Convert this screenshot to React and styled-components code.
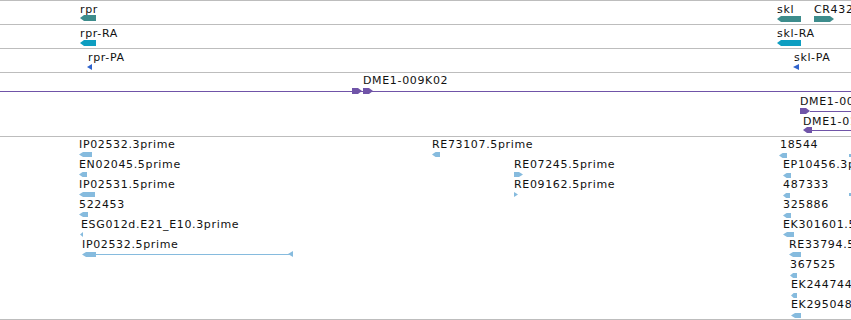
import React from 'react'
import styled, { createGlobalStyle } from 'styled-components'

const GlobalStyle = createGlobalStyle`
  html, body {
    margin: 0;
    padding: 0;
    background: #fff;
  }
  body {
    width: 851px;
    height: 320px;
    overflow: hidden;
    font-family: "DejaVu Sans", "Liberation Sans", sans-serif;
  }
`

const C = {
  gene: '#3d8c8c',
  mrna: '#0e9ec1',
  cds: '#2f63cd',
  clone: '#7054a8',
  est: '#86bbde',
  rule: '#bdbdbd',
}

// page rows, top is the y of each track's separator line
const tracks = [
  {
    top: 0, h: 24,
    labels: [['rpr', 80, 5], ['skl', 777, 5], ['CR43238', 814, 5]],
    glyphs: [
      { s: 'L', x: 80, w: 16, y: 15, h: 6, c: C.gene },
      { s: 'L', x: 777, w: 24, y: 16, h: 6, c: C.gene },
      { s: 'R', x: 814, w: 20, y: 16, h: 6, c: C.gene },
    ],
  },
  {
    top: 24, h: 24,
    labels: [['rpr-RA', 80, 29], ['skl-RA', 777, 29]],
    glyphs: [
      { s: 'L', x: 80, w: 16, y: 40, h: 6, c: C.mrna },
      { s: 'L', x: 777, w: 24, y: 40, h: 6, c: C.mrna },
    ],
  },
  {
    top: 48, h: 24,
    labels: [['rpr-PA', 88, 53], ['skl-PA', 794, 53]],
    glyphs: [
      { s: 'tL', x: 87, w: 5, y: 64, h: 6, c: C.cds },
      { s: 'tL', x: 793, w: 6, y: 64, h: 6, c: C.cds },
    ],
  },
  {
    top: 72, h: 64,
    labels: [['DME1-009K02', 363, 76], ['DME1-006C11', 800, 97], ['DME1-014B07', 803, 117]],
    glyphs: [
      { s: 'line', x: 0, w: 851, y: 91, h: 1, c: C.clone },
      { s: 'R', x: 352, w: 10, y: 88, h: 6, c: C.clone },
      { s: 'R', x: 363, w: 10, y: 88, h: 6, c: C.clone },
      { s: 'R', x: 800, w: 10, y: 108, h: 6, c: C.clone },
      { s: 'line', x: 810, w: 41, y: 111, h: 1, c: C.clone },
      { s: 'L', x: 803, w: 9, y: 127, h: 6, c: C.clone },
      { s: 'line', x: 812, w: 39, y: 130, h: 1, c: C.clone },
    ],
  },
  {
    top: 136, h: 184, last: true,
    labels: [
      ['IP02532.3prime', 79, 140],
      ['EN02045.5prime', 79, 160],
      ['IP02531.5prime', 79, 180],
      ['522453', 79, 200],
      ['ESG012d.E21_E10.3prime', 81, 220],
      ['IP02532.5prime', 82, 240],
      ['RE73107.5prime', 432, 140],
      ['RE07245.5prime', 514, 160],
      ['RE09162.5prime', 514, 180],
      ['18544', 780, 140],
      ['EP10456.3prime', 783, 160],
      ['487333', 783, 180],
      ['325886', 783, 200],
      ['EK301601.5prime', 783, 220],
      ['RE33794.5prime', 789, 240],
      ['367525', 790, 260],
      ['EK244744.5prime', 791, 280],
      ['EK295048.5prime', 791, 300],
    ],
    glyphs: [
      { s: 'L', x: 79, w: 13, y: 152, h: 5, c: C.est },
      { s: 'L', x: 79, w: 8, y: 172, h: 5, c: C.est },
      { s: 'L', x: 79, w: 16, y: 192, h: 5, c: C.est },
      { s: 'L', x: 79, w: 9, y: 212, h: 5, c: C.est },
      { s: 'tL', x: 80, w: 3, y: 232, h: 5, c: C.est },
      { s: 'L', x: 82, w: 14, y: 252, h: 5, c: C.est },
      { s: 'line', x: 96, w: 194, y: 254, h: 1, c: C.est },
      { s: 'tL', x: 288, w: 5, y: 251, h: 6, c: C.est },
      { s: 'L', x: 432, w: 8, y: 152, h: 5, c: C.est },
      { s: 'R', x: 514, w: 9, y: 172, h: 5, c: C.est },
      { s: 'tR', x: 514, w: 4, y: 192, h: 5, c: C.est },
      { s: 'L', x: 779, w: 8, y: 153, h: 5, c: C.est },
      { s: 'L', x: 783, w: 8, y: 173, h: 5, c: C.est },
      { s: 'L', x: 783, w: 7, y: 193, h: 5, c: C.est },
      { s: 'L', x: 783, w: 8, y: 213, h: 5, c: C.est },
      { s: 'L', x: 783, w: 11, y: 232, h: 5, c: C.est },
      { s: 'L', x: 789, w: 12, y: 252, h: 5, c: C.est },
      { s: 'L', x: 790, w: 7, y: 273, h: 5, c: C.est },
      { s: 'L', x: 791, w: 6, y: 293, h: 5, c: C.est },
      { s: 'L', x: 791, w: 10, y: 313, h: 5, c: C.est },
      { s: 'line', x: 849, w: 2, y: 154, h: 3, c: C.est },
      { s: 'line', x: 849, w: 2, y: 193, h: 3, c: C.est },
    ],
  },
]

const Panel = styled.div`
  width: 851px;
  display: flex;
  flex-direction: column;
`

const Track = styled.div`
  position: relative;
  box-sizing: border-box;
  flex: none;
  height: ${p => p.$h}px;
  border-top: 1px solid ${C.rule};
  border-bottom: ${p => (p.$last ? `1px solid ${C.rule}` : 'none')};
  overflow: hidden;
`

const Label = styled.span.attrs(p => ({ style: { left: p.$x, top: p.$y } }))`
  position: absolute;
  font-size: 11px;
  line-height: 11px;
  letter-spacing: 0.65px;
  white-space: nowrap;
  color: #111;
`

const Svg = styled.svg.attrs(p => ({ style: { left: p.$x, top: p.$y } }))`
  position: absolute;
  display: block;
  overflow: visible;
`

const shapePoints = (s, w, h) => {
  const a = Math.min(4, w * 0.45)
  const m = h / 2
  if (s === 'L') return `0,${m} ${a},0 ${w},0 ${w},${h} ${a},${h}`
  if (s === 'R') return `0,0 ${w - a},0 ${w},${m} ${w - a},${h} 0,${h}`
  if (s === 'tL') return `0,${m} ${w},0 ${w},${h}`
  if (s === 'tR') return `0,0 ${w},${m} 0,${h}`
  return `0,0 ${w},0 ${w},${h} 0,${h}`
}

const Glyph = ({ g, top }) => (
  <Svg $x={g.x} $y={g.y - top - 1} width={g.w} height={g.h} viewBox={`0 0 ${g.w} ${g.h}`}>
    <polygon points={shapePoints(g.s, g.w, g.h)} fill={g.c} />
  </Svg>
)

export default function App() {
  return (
    <Panel>
      <GlobalStyle />
      {tracks.map((t, i) => (
        <Track key={i} $h={t.h} $last={t.last}>
          {t.glyphs.map((g, j) => <Glyph key={'g' + j} g={g} top={t.top} />)}
          {t.labels.map(([text, x, y], j) => (
            <Label key={'l' + j} $x={x} $y={y - t.top - 2}>{text}</Label>
          ))}
        </Track>
      ))}
    </Panel>
  )
}
